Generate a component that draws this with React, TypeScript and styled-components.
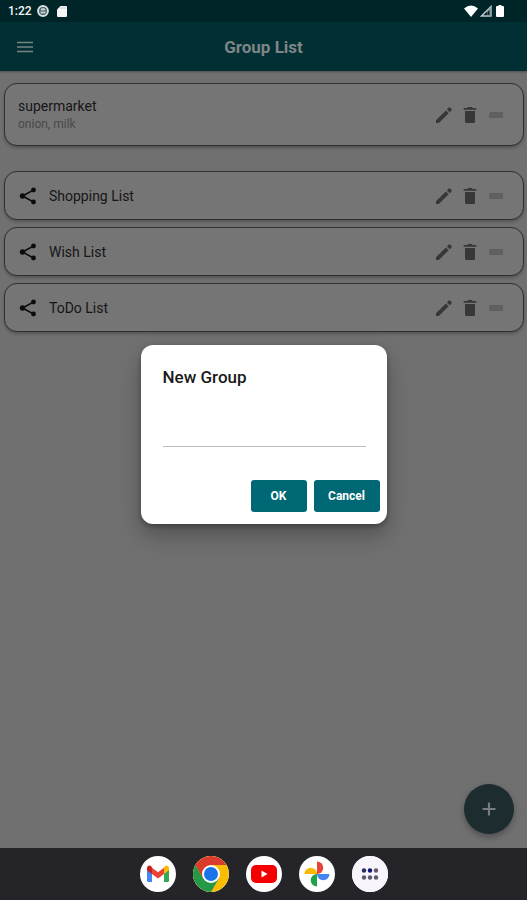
import React from "react";
import styled, { createGlobalStyle } from "styled-components";

const GlobalStyle = createGlobalStyle`
  * { box-sizing: border-box; }
  body { margin: 0; background: #707070; font-family: Roboto, "Liberation Sans", sans-serif; }
  button { font-family: inherit; border: 0; padding: 0; background: none; cursor: pointer; }
  svg { display: block; }
  h1, h2, p, ul { margin: 0; padding: 0; }
`;

const Screen = styled.div`
  position: relative;
  display: flex;
  flex-direction: column;
  min-height: 100vh;
  background: #707070;
`;

const StatusBar = styled.div`
  display: flex;
  align-items: center;
  justify-content: space-between;
  height: 22px;
  padding: 0 21px 0 8px;
  background: #002529;
  color: #f4f4f4;
`;

const StatusGroup = styled.div<{ $gap: number }>`
  display: flex;
  align-items: center;
  gap: ${(p) => p.$gap}px;
`;

const Clock = styled.span`
  font-size: 12px;
  font-weight: 500;
  line-height: 22px;
`;

const AppBar = styled.header`
  display: grid;
  grid-template-columns: 50px 1fr 50px;
  align-items: center;
  height: 49px;
  background: #003034;
  color: #7f8586;
  box-shadow: 0 1px 2px rgba(0, 0, 0, 0.3);
`;

const MenuButton = styled.button`
  display: grid;
  place-items: center;
  height: 48px;
  color: #788283;
`;

const Title = styled.h1`
  text-align: center;
  font-size: 17px;
  font-weight: 700;
  line-height: 24px;
`;

const Content = styled.main`
  flex: 1;
  padding: 12px 3px 0 4px;
`;

const Cards = styled.ul`
  display: flex;
  flex-direction: column;
  gap: 7px;
  list-style: none;
`;

const Card = styled.li<{ $featured?: boolean }>`
  display: flex;
  align-items: center;
  height: ${(p) => (p.$featured ? 63 : 49)}px;
  margin-bottom: ${(p) => (p.$featured ? 18 : 0)}px;
  padding: 0 17px 0 13px;
  border: 1px solid #303030;
  border-radius: 13px;
  background: #757575;
  box-shadow: 0 2px 3px rgba(0, 0, 0, 0.25);
`;

const ShareSlot = styled.span`
  display: flex;
  width: 31px;
  color: #0c0c0c;
`;

const CardText = styled.div`
  flex: 1;
`;

const CardTitle = styled.p`
  font-size: 14px;
  line-height: 18px;
  color: #161616;
`;

const CardNote = styled.p`
  font-size: 12px;
  line-height: 18px;
  color: #494949;
`;

const Actions = styled.div`
  display: flex;
  gap: 6px;
`;

const IconButton = styled.button<{ $faint?: boolean }>`
  display: grid;
  place-items: center;
  width: 20px;
  height: 24px;
  color: ${(p) => (p.$faint ? "#595959" : "#373737")};
`;

const AddButton = styled.button`
  position: absolute;
  right: 13px;
  bottom: 66px;
  display: grid;
  place-items: center;
  width: 50px;
  height: 50px;
  border-radius: 50%;
  background: #1d2c2e;
  color: #777d7e;
  box-shadow: 0 3px 6px rgba(0, 0, 0, 0.3);
`;

const Overlay = styled.div`
  position: absolute;
  inset: 22px 0 54px;
  display: grid;
  place-items: center;
`;

const Dialog = styled.form`
  display: flex;
  flex-direction: column;
  width: 246px;
  padding: 20px 7px 12px 22px;
  border-radius: 12px;
  background: #ffffff;
  box-shadow: 0 12px 22px rgba(0, 0, 0, 0.26), 0 2px 5px rgba(0, 0, 0, 0.3);
`;

const DialogTitle = styled.label`
  font-size: 17px;
  line-height: 24px;
  font-weight: 500;
  color: #1a1a1a;
`;

const NameInput = styled.input`
  height: 36px;
  margin: 22px 14px 33px 0;
  padding: 4px 0;
  border: 0;
  border-bottom: 1px solid #bcbcbc;
  border-radius: 0;
  outline: none;
  background: transparent;
  font: 16px/24px Roboto, "Liberation Sans", sans-serif;
`;

const DialogActions = styled.div`
  display: flex;
  justify-content: flex-end;
  gap: 7px;
`;

const DialogButton = styled.button<{ $wide?: boolean }>`
  width: ${(p) => (p.$wide ? 66 : 56)}px;
  height: 32px;
  border-radius: 3px;
  background: #006874;
  color: #ffffff;
  font-size: 12px;
  font-weight: 700;
`;

const Dock = styled.nav`
  display: flex;
  align-items: center;
  justify-content: center;
  gap: 17px;
  height: 52px;
  background: #242429;
`;

const DockButton = styled.button`
  width: 36px;
  height: 36px;
  border-radius: 50%;
  background: #ffffff;
  overflow: hidden;
`;

const ShareIcon = () => (
  <svg width="20" height="20" viewBox="0 0 20 20" fill="currentColor" stroke="currentColor" aria-hidden="true">
    <path d="M15.500 4 4.500 10l11 6" fill="none" strokeWidth="1.500" />
    <circle cx="15.500" cy="4" r="2.400" stroke="none" />
    <circle cx="4.500" cy="10" r="2.700" stroke="none" />
    <circle cx="15.500" cy="16" r="2.400" stroke="none" />
  </svg>
);

const PencilIcon = () => (
  <svg width="18" height="18" viewBox="0 0 18 18" fill="currentColor" aria-hidden="true">
    <path d="M1 14.200V17h2.800L13.700 7.200 10.900 4.400zM11.900 3.400l2.800 2.800 1.900-1.900q.6-.6 0-1.200l-1.600-1.600q-.6-.6-1.200 0z" />
  </svg>
);

const TrashIcon = () => (
  <svg width="18" height="18" viewBox="0 0 18 18" fill="currentColor" aria-hidden="true">
    <path d="M4 5h10v10.500q0 1.500-1.500 1.500h-7Q4 17 4 15.500zM2.700 2h3.600l.8-1h3.800l.8 1h3.600v1.700H2.700z" />
  </svg>
);

const HandleIcon = () => (
  <svg width="16" height="8" viewBox="0 0 16 8" fill="currentColor" aria-hidden="true">
    <path d="M2 1h13v6H1V3z" opacity=".75" />
  </svg>
);

const GmailIcon = () => (
  <svg width="36" height="36" viewBox="0 0 36 36" aria-hidden="true">
    <path d="M7 13v11.500q0 1.500 1.500 1.500H12V15z" fill="#4285f4" />
    <path d="M24 15v11h3.500q1.500 0 1.500-1.500V13z" fill="#34a853" />
    <path d="M24 11.700V18l5-3.800V12c0-2.300-2.400-3.300-4.100-2z" fill="#fbbc04" />
    <path d="M7 12v2.200l5 3.800v-6.300L11.100 10C9.400 8.700 7 9.700 7 12z" fill="#c5221f" />
    <path d="m12 11.700 6 4.500 6-4.500V18l-6 4.500-6-4.500z" fill="#ea4335" />
  </svg>
);

const ChromeIcon = () => (
  <svg width="36" height="36" viewBox="0 0 36 36" aria-hidden="true">
    <circle cx="18" cy="18" r="18" fill="#fbbc04" />
    <path d="M18 18 10.200 22.500 2.400 9A18 18 0 0 1 33.600 9H18z" fill="#db3b2c" />
    <path d="M2.400 9A18 18 0 0 0 18 36l7.800-13.500L18 18l-7.800 4.500z" fill="#249a48" />
    <circle cx="18" cy="18" r="9" fill="#fff" />
    <circle cx="18" cy="18" r="7" fill="#1a73e8" />
  </svg>
);

const YoutubeIcon = () => (
  <svg width="36" height="36" viewBox="0 0 36 36" aria-hidden="true">
    <rect x="5" y="9" width="26" height="18" rx="5" fill="#f50000" />
    <path d="m15.500 14.500 6 3.500-6 3.500z" fill="#fff" />
  </svg>
);

const PhotosIcon = () => (
  <svg width="36" height="36" viewBox="0 0 36 36" aria-hidden="true">
    <path d="M18 18V5.500a6.250 6.250 0 0 1 0 12.500z" fill="#ea4335" />
    <path d="M18 18h12.500a6.250 6.250 0 0 1-12.500 0z" fill="#4285f4" />
    <path d="M18 18v12.500a6.250 6.250 0 0 1 0-12.500z" fill="#1fa14a" />
    <path d="M18 18H5.500a6.250 6.250 0 0 1 12.500 0z" fill="#fbb904" />
  </svg>
);

const AppsIcon = () => (
  <svg width="36" height="36" viewBox="0 0 36 36" aria-hidden="true">
    <rect width="36" height="36" fill="#f8f5fc" />
    <g fill="#292b68">
      <circle cx="12" cy="14.500" r="2.200" />
      <circle cx="18" cy="14.500" r="2.200" fill="#10117a" />
      <circle cx="24" cy="14.500" r="2.200" fill="#67586c" />
    </g>
    <g fill="#5d5970">
      <circle cx="12" cy="21.500" r="2.200" />
      <circle cx="18" cy="21.500" r="2.200" />
      <circle cx="24" cy="21.500" r="2.200" />
    </g>
  </svg>
);

const groups = [
  { name: "supermarket", note: "onion, milk", shared: false },
  { name: "Shopping List", shared: true },
  { name: "Wish List", shared: true },
  { name: "ToDo List", shared: true },
];

const apps = [
  { name: "Gmail", Icon: GmailIcon },
  { name: "Chrome", Icon: ChromeIcon },
  { name: "YouTube", Icon: YoutubeIcon },
  { name: "Photos", Icon: PhotosIcon },
  { name: "All apps", Icon: AppsIcon },
];

export default function App() {
  return (
    <Screen>
      <GlobalStyle />
      <StatusBar>
        <StatusGroup $gap={5}>
          <Clock>1:22</Clock>
          <svg width="12" height="12" viewBox="0 0 12 12" aria-hidden="true">
            <circle cx="6" cy="6" r="4.900" fill="#42595c" stroke="#d5e1e2" strokeWidth="2" />
            <path d="M3.500 5.500a2.500 2.500 0 0 1 5 0zM3.500 6.500h5v2h-5z" fill="#c2d0d2" />
          </svg>
          <svg width="16" height="12" viewBox="0 0 16 12" aria-hidden="true">
            <path d="M6.500 1H12q1 0 1 1v9q0 1-1 1H4q-1 0-1-1V4.500z" fill="#f6f6f6" />
            <path d="M7 2v2M9 2v2M11 2v2" stroke="#a9b0b1" strokeWidth=".7" />
          </svg>
        </StatusGroup>
        <StatusGroup $gap={2}>
          <svg width="14" height="12" viewBox="0 0 14 12" aria-hidden="true">
            <path d="M0 3.500Q7-2.500 14 3.500L7 12z" fill="#fff" />
          </svg>
          <svg width="12" height="12" viewBox="0 0 12 12" aria-hidden="true">
            <path d="M1.500 11 11 1.500V11z" fill="none" stroke="#c2cbcc" strokeWidth="1.400" />
            <path d="M7 6v5h4V2z" fill="#8d9b9d" />
            <path d="M7.500 7v3h2V5z" fill="#002529" />
          </svg>
          <svg width="12" height="12" viewBox="0 0 12 12" aria-hidden="true">
            <path d="M4.500 0h3v1H9q1 0 1 1v9q0 1-1 1H3q-1 0-1-1V2q0-1 1-1h1.500z" fill="#fff" />
          </svg>
        </StatusGroup>
      </StatusBar>

      <AppBar>
        <MenuButton type="button" aria-label="Menu">
          <svg width="18" height="12" viewBox="0 0 18 12" stroke="currentColor" strokeWidth="1.700" aria-hidden="true">
            <path d="M1 1.500h16M1 6h16M1 10.500h16" />
          </svg>
        </MenuButton>
        <Title>Group List</Title>
      </AppBar>

      <Content>
        <Cards>
          {groups.map((g) => (
            <Card key={g.name} $featured={!g.shared}>
              {g.shared && (
                <ShareSlot>
                  <ShareIcon />
                </ShareSlot>
              )}
              <CardText>
                <CardTitle>{g.name}</CardTitle>
                {g.note && <CardNote>{g.note}</CardNote>}
              </CardText>
              <Actions>
                <IconButton type="button" aria-label={`Edit ${g.name}`}>
                  <PencilIcon />
                </IconButton>
                <IconButton type="button" aria-label={`Delete ${g.name}`}>
                  <TrashIcon />
                </IconButton>
                <IconButton type="button" $faint aria-label={`Move ${g.name}`}>
                  <HandleIcon />
                </IconButton>
              </Actions>
            </Card>
          ))}
        </Cards>
      </Content>

      <AddButton type="button" aria-label="Add group">
        <svg width="14" height="14" viewBox="0 0 14 14" stroke="currentColor" strokeWidth="2.200" aria-hidden="true">
          <path d="M7 .5v13M.5 7h13" />
        </svg>
      </AddButton>

      <Dock>
        {apps.map(({ name, Icon }) => (
          <DockButton key={name} type="button" aria-label={name}>
            <Icon />
          </DockButton>
        ))}
      </Dock>

      <Overlay>
        <Dialog role="dialog" aria-modal="true" aria-labelledby="dialog-title" onSubmit={(e) => e.preventDefault()}>
          <DialogTitle id="dialog-title" htmlFor="group-name">
            New Group
          </DialogTitle>
          <NameInput id="group-name" type="text" />
          <DialogActions>
            <DialogButton type="submit">OK</DialogButton>
            <DialogButton type="button" $wide>
              Cancel
            </DialogButton>
          </DialogActions>
        </Dialog>
      </Overlay>
    </Screen>
  );
}
